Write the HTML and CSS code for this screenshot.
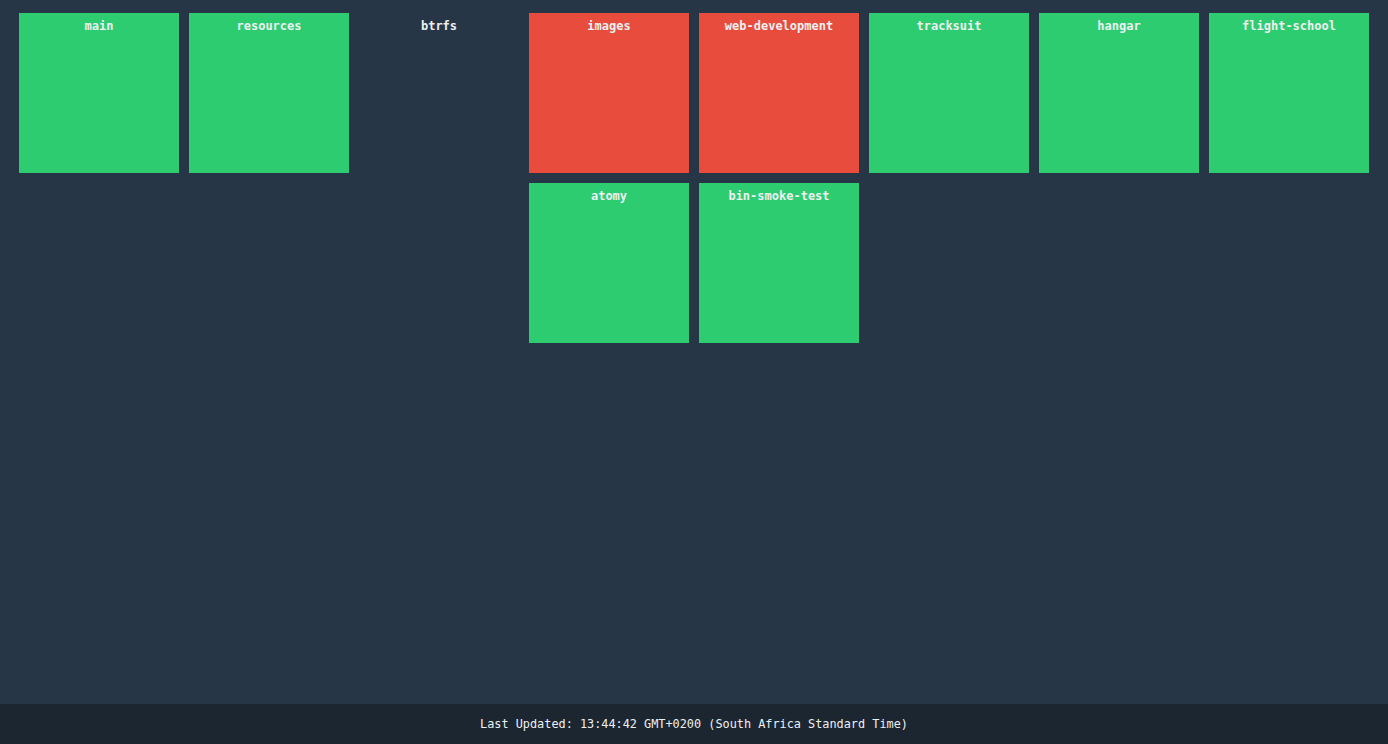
FILE: index.html
```html
<!DOCTYPE html>
<html>
<head>
<meta charset="utf-8">
<link rel="stylesheet" href="styles.css">
</head>
<body>
<div class="board">
  <div class="tile ok">main</div>
  <div class="tile ok">resources</div>
  <div class="tile group">btrfs</div>
  <div class="tile fail">images</div>
  <div class="tile fail">web-development</div>
  <div class="tile ok">tracksuit</div>
  <div class="tile ok">hangar</div>
  <div class="tile ok">flight-school</div>
  <div class="tile ok col4">atomy</div>
  <div class="tile ok">bin-smoke-test</div>
</div>
<div class="footer">Last Updated: 13:44:42 GMT+0200 (South Africa Standard Time)</div>
</body>
</html>
```
FILE: styles.css
```css
html, body {
  margin: 0;
  height: 100%;
  background: #263646;
  font-family: "DejaVu Sans Mono", "Liberation Mono", monospace;
}
.board {
  display: grid;
  grid-template-columns: repeat(8, 160px);
  grid-auto-rows: 160px;
  gap: 10px;
  justify-content: center;
  padding-top: 13px;
}
.tile {
  color: #ecf0f1;
  font-size: 12px;
  font-weight: bold;
  text-align: center;
  padding-top: 6px;
  line-height: 15px;
  box-sizing: border-box;
}
.ok { background: #2ecc71; }
.fail { background: #e74c3c; }
.group { background: transparent; }
.col4 { grid-column-start: 4; }
.footer {
  position: fixed;
  left: 0;
  right: 0;
  bottom: 0;
  height: 40px;
  background: #1c2631;
  color: #ecf0f1;
  font-size: 11.85px;
  line-height: 40px;
  text-align: center;
}
```
